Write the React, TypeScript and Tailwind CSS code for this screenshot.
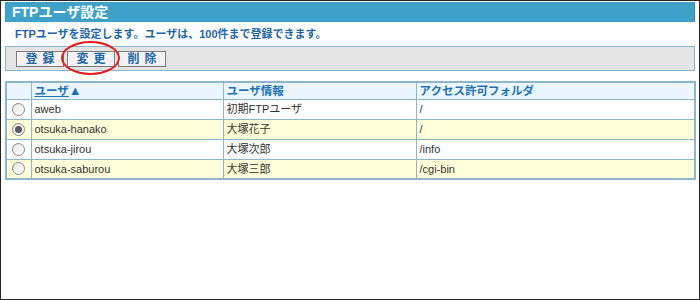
import React from 'react';

const rows = [
  { id: 'aweb', info: '初期FTPユーザ', folder: '/', checked: false },
  { id: 'otsuka-hanako', info: '大塚花子', folder: '/', checked: true },
  { id: 'otsuka-jirou', info: '大塚次郎', folder: '/info', checked: false },
  { id: 'otsuka-saburou', info: '大塚三郎', folder: '/cgi-bin', checked: false },
];

const font = { fontFamily: '"Liberation Sans", "Noto Sans CJK JP", sans-serif' };

const Radio: React.FC<{ checked: boolean }> = ({ checked }) => (
  <span className="flex items-center justify-center w-[13px] h-[13px] rounded-full border border-[#8a8a8a] bg-gradient-to-br from-[#e6e6e6] to-white">
    {checked && <span className="w-[7px] h-[7px] rounded-full bg-[#5a5a5a]" />}
  </span>
);

const ToolButton: React.FC<{ label: string }> = ({ label }) => (
  <button className="w-[48px] h-[16px] flex items-center justify-center border border-[#7a7a7a] bg-[#f3f3f3] shadow-[inset_1px_1px_0_#fff] text-[12px] font-bold text-[#1f66a6] tracking-[5px] pl-[5px] leading-none">
    {label}
  </button>
);

export default function App() {
  return (
    <div className="w-[700px] h-[300px] border border-[#262626] bg-white px-[4px] pt-[1px] relative" style={font}>
      <div className="h-[20px] bg-[#3fa1c7] border-r border-[#2f88ad] text-white font-bold text-[14px] leading-[20px] pl-[7px]">
        FTPユーザ設定
      </div>
      <div className="h-[24px] flex items-center pl-[10px] text-[11px] font-bold text-[#1f66a6]">
        FTPユーザを設定します。ユーザは、100件まで登録できます。
      </div>
      <div className="h-[25px] flex items-center gap-[3px] pl-[10px] border border-[#86b5cc] bg-[#e4e4e4]">
        <ToolButton label="登録" />
        <ToolButton label="変更" />
        <ToolButton label="削除" />
      </div>
      <div className="absolute left-[60px] top-[40px] w-[59px] h-[34px] rounded-[50%] border-2 border-[#e01e1e]" />
      <table className="mt-[10px] w-[691px] border-collapse border-2 border-[#8cb6ca] text-[11px] text-[#333]">
        <colgroup>
          <col className="w-[25px]" />
          <col className="w-[192px]" />
          <col className="w-[193px]" />
          <col />
        </colgroup>
        <thead>
          <tr className="h-[17px] bg-[#eaf5fd] text-[11.5px] font-bold text-[#1f73b4] text-left leading-[14px]">
            <th className="border border-[#8cb6ca]" />
            <th className="border border-[#8cb6ca] px-[3px] font-bold">
              <span className="underline">ユーザ</span>
              <span className="text-[13px]">▲</span>
            </th>
            <th className="border border-[#8cb6ca] px-[3px] font-bold">ユーザ情報</th>
            <th className="border border-[#8cb6ca] px-[3px] font-bold">アクセス許可フォルダ</th>
          </tr>
        </thead>
        <tbody>
          {rows.map((r, i) => (
            <tr key={r.id} className={`h-[20px] ${i % 2 === 1 ? 'bg-[#ffffd9]' : 'bg-white'}`}>
              <td className="border border-[#8cb6ca]">
                <div className="flex justify-center">
                  <Radio checked={r.checked} />
                </div>
              </td>
              <td className="border border-[#8cb6ca] px-[3px]">{r.id}</td>
              <td className="border border-[#8cb6ca] px-[3px]">{r.info}</td>
              <td className="border border-[#8cb6ca] px-[3px]">{r.folder}</td>
            </tr>
          ))}
        </tbody>
      </table>
    </div>
  );
}
